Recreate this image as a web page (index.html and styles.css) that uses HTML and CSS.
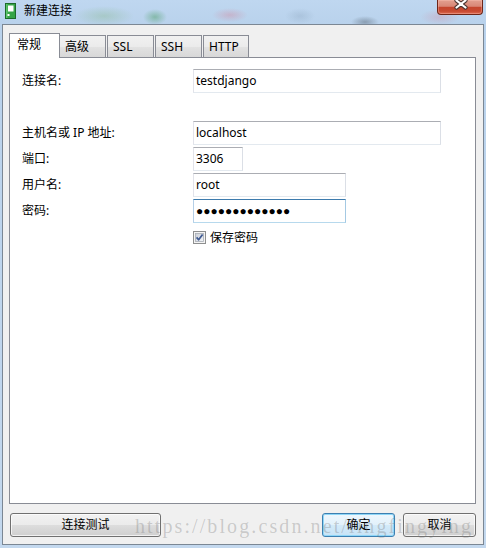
FILE: index.html
```html
<!DOCTYPE html>
<html lang="zh-CN">
<head>
<meta charset="utf-8">
<title>新建连接</title>
<link rel="stylesheet" href="styles.css">
</head>
<body>
<div class="win">
  <div class="titlebar">
    <svg class="appicon" viewBox="0 0 11 16" width="11" height="16">
      <rect x="0.5" y="0.5" width="10" height="15" fill="#35a447" stroke="#1c6b2b"/>
      <rect x="1" y="1" width="1.5" height="14" fill="#5cc46a"/>
      <rect x="3" y="2.5" width="5.5" height="6" fill="#ffffff"/>
      <rect x="2.5" y="11" width="2" height="2" fill="#ffffff"/>
    </svg>
    <span class="title">新建连接</span>
    <div class="close">
      <svg viewBox="0 0 46 15" width="46" height="15">
        <path d="M19.5 1.5 L28.5 8.5 M28.5 1.5 L19.5 8.5" stroke="#4a3430" stroke-width="4.2" stroke-linecap="round" fill="none"/>
        <path d="M19.5 1.5 L28.5 8.5 M28.5 1.5 L19.5 8.5" stroke="#ffffff" stroke-width="2.2" stroke-linecap="round" fill="none"/>
      </svg>
    </div>
  </div>
  <div class="client">
    <div class="tabs">
      <div class="tab active">常规</div>
      <div class="tab second">高级</div>
      <div class="tab">SSL</div>
      <div class="tab">SSH</div>
      <div class="tab last">HTTP</div>
    </div>
    <div class="panel">
      <div class="row">
        <span class="label">连接名:</span>
        <div class="field w-xl">testdjango</div>
      </div>
      <div class="row gap-large">
        <span class="label">主机名或 IP 地址:</span>
        <div class="field w-xl">localhost</div>
      </div>
      <div class="row">
        <span class="label">端口:</span>
        <div class="field w-s">3306</div>
      </div>
      <div class="row">
        <span class="label">用户名:</span>
        <div class="field w-m">root</div>
      </div>
      <div class="row">
        <span class="label">密码:</span>
        <div class="field w-m focus"><span class="dots">●●●●●●●●●●●●●</span></div>
      </div>
      <div class="row check">
        <span class="label"></span>
        <svg class="checkbox" viewBox="0 0 13 13" width="13" height="13">
          <defs>
            <linearGradient id="cbg" x1="0" y1="0" x2="1" y2="1">
              <stop offset="0" stop-color="#c9cdd5"/>
              <stop offset="1" stop-color="#f4f6f9"/>
            </linearGradient>
          </defs>
          <rect x="0.5" y="0.5" width="12" height="12" fill="#f4f4f4" stroke="#8e8f8f"/>
          <rect x="2.5" y="2.5" width="8" height="8" fill="url(#cbg)" stroke="#a9adb5" stroke-width="0.8"/>
          <path d="M3.6 6.4 L5.6 8.8 L9.6 3.4" stroke="#3f5a92" stroke-width="1.7" fill="none" stroke-linejoin="round"/>
        </svg>
        <span class="check-label">保存密码</span>
      </div>
    </div>
    <div class="buttons">
      <div class="btn test">连接测试</div>
      <div class="btn default">确定</div>
      <div class="btn cancel">取消</div>
    </div>
  </div>
  <div class="watermark">https://blog.csdn.net/lingfingying</div>
</div>
</body>
</html>
```

FILE: styles.css
```css
* {
  box-sizing: border-box;
  margin: 0;
  padding: 0;
}

html, body {
  width: 486px;
  height: 548px;
  overflow: hidden;
}

body {
  background: #c0d6ed;
  font-family: "Noto Sans", "Noto Sans CJK SC", sans-serif;
  font-size: 12px;
  line-height: 16px;
  color: #000;
}

.win {
  position: relative;
  width: 486px;
  height: 548px;
  display: flex;
  flex-direction: column;
  background:
    radial-gradient(ellipse 30px 10px at 104px 16px, rgba(130, 180, 130, 0.35), transparent),
    radial-gradient(ellipse 12px 8px at 155px 17px, rgba(50, 145, 70, 0.4), transparent),
    radial-gradient(ellipse 18px 7px at 230px 15px, rgba(220, 100, 120, 0.28), transparent),
    radial-gradient(ellipse 15px 8px at 300px 16px, rgba(140, 165, 190, 0.35), transparent),
    radial-gradient(ellipse 14px 6px at 365px 22px, rgba(50, 60, 70, 0.35), transparent),
    radial-gradient(ellipse 20px 8px at 440px 17px, rgba(220, 100, 120, 0.22), transparent),
    linear-gradient(#bfd7f0, #b9d2ec 24px, #c3d8ee);
}

/* ---------- title bar ---------- */
.titlebar {
  flex: none;
  height: 24px;
  display: flex;
  align-items: flex-start;
}

.appicon {
  flex: none;
  margin: 3px 0 0 5px;
}

.title {
  margin: 2px 0 0 8px;
  font-family: "Noto Sans CJK SC", sans-serif;
  line-height: 16px;
}

.close {
  flex: none;
  margin-left: auto;
  margin-right: 3px;
  width: 46px;
  height: 15px;
  border: 1px solid #6e2618;
  border-top: none;
  border-radius: 0 0 4px 4px;
  background: linear-gradient(#e3a090 0%, #d98776 45%, #c5462e 52%, #c84a31 80%, #de6e55 100%);
  box-shadow: inset 0 0 0 1px rgba(255, 200, 190, 0.35);
  overflow: hidden;
}

.close svg {
  display: block;
  margin: -1px 0 0 -1px;
}

/* ---------- client area ---------- */
.client {
  flex: none;
  height: 521px;
  margin: 0 2px;
  border: 1px solid #7b8794;
  background: #f0f0f0;
  display: flex;
  flex-direction: column;
}

.tabs {
  position: relative;
  z-index: 1;
  height: 24px;
  margin: 8px 0 0 6px;
  display: flex;
  align-items: flex-end;
}

.tab {
  height: 22px;
  width: 47px;
  margin-left: 1px;
  padding: 3px 0 0 5px;
  border: 1px solid #898c95;
  border-bottom: none;
  background: linear-gradient(#f1f1f1, #ebebeb 50%, #e1e1e1 55%, #d8d8d8);
  white-space: nowrap;
}

.tab.active {
  height: 25px;
  width: 51px;
  margin: 0 0 -1px 0;
  padding-left: 7px;
  background: #fff;
}

.tab.second {
  width: 46px;
  margin-left: 0;
  border-left: none;
  padding-left: 5px;
}

.tab.last {
  width: 46px;
}

.panel {
  flex: none;
  height: 447px;
  margin: 0 7px 0 6px;
  border: 1px solid #898c95;
  background: #fff;
  padding: 11px 0 0 12px;
}

.row {
  display: flex;
  align-items: center;
  height: 24px;
}

.row + .row {
  margin-top: 2px;
}

.row.gap-large {
  margin-top: 28px;
}

.row.check {
  height: 13px;
  margin-top: 8px;
}

.label {
  flex: none;
  width: 171px;
  white-space: nowrap;
}

.field {
  flex: none;
  height: 24px;
  padding: 0 2px;
  line-height: 22px;
  background: #fff;
  border: 1px solid;
  border-color: #abadb3 #dbdfe6 #e3e9ef #e2e3ea;
  white-space: nowrap;
  overflow: hidden;
}

.field.focus {
  border-color: #3d7bad #a4c9e3 #b7d9ed #b5cfe7;
}

.w-xl { width: 248px; }
.w-s { width: 50px; }
.w-m { width: 153px; }

.dots {
  font-family: "Liberation Sans", sans-serif;
  font-size: 12px;
}

.checkbox {
  flex: none;
  display: block;
}

.check-label {
  margin-left: 4px;
  line-height: 16px;
}

/* ---------- buttons ---------- */
.buttons {
  flex: none;
  height: 24px;
  margin: 9px 7px 0 7px;
  display: flex;
}

.btn {
  height: 24px;
  width: 73px;
  border: 1px solid #707070;
  border-radius: 3px;
  background: linear-gradient(#f2f2f2 0%, #ebebeb 50%, #dddddd 51%, #cfcfcf 100%);
  box-shadow: inset 0 0 0 1px rgba(255, 255, 255, 0.7);
  display: flex;
  align-items: center;
  justify-content: center;
  line-height: 16px;
}

.btn.test {
  width: 151px;
  margin-right: auto;
}

.btn.default {
  border-color: #3c7fb1;
  background: linear-gradient(#eef7fd 0%, #e2f1fb 50%, #d3eaf9 51%, #c7e3f6 100%);
  box-shadow: inset 0 0 0 1px #8ed6f7;
}

.btn.cancel {
  margin-left: 8px;
}

/* ---------- watermark overlay ---------- */
.watermark {
  position: absolute;
  left: 135px;
  top: 513px;
  z-index: 5;
  font-family: "Liberation Serif", serif;
  font-size: 20px;
  line-height: 26px;
  letter-spacing: 2.1px;
  color: rgba(120, 120, 120, 0.33);
  white-space: nowrap;
  pointer-events: none;
}
```
